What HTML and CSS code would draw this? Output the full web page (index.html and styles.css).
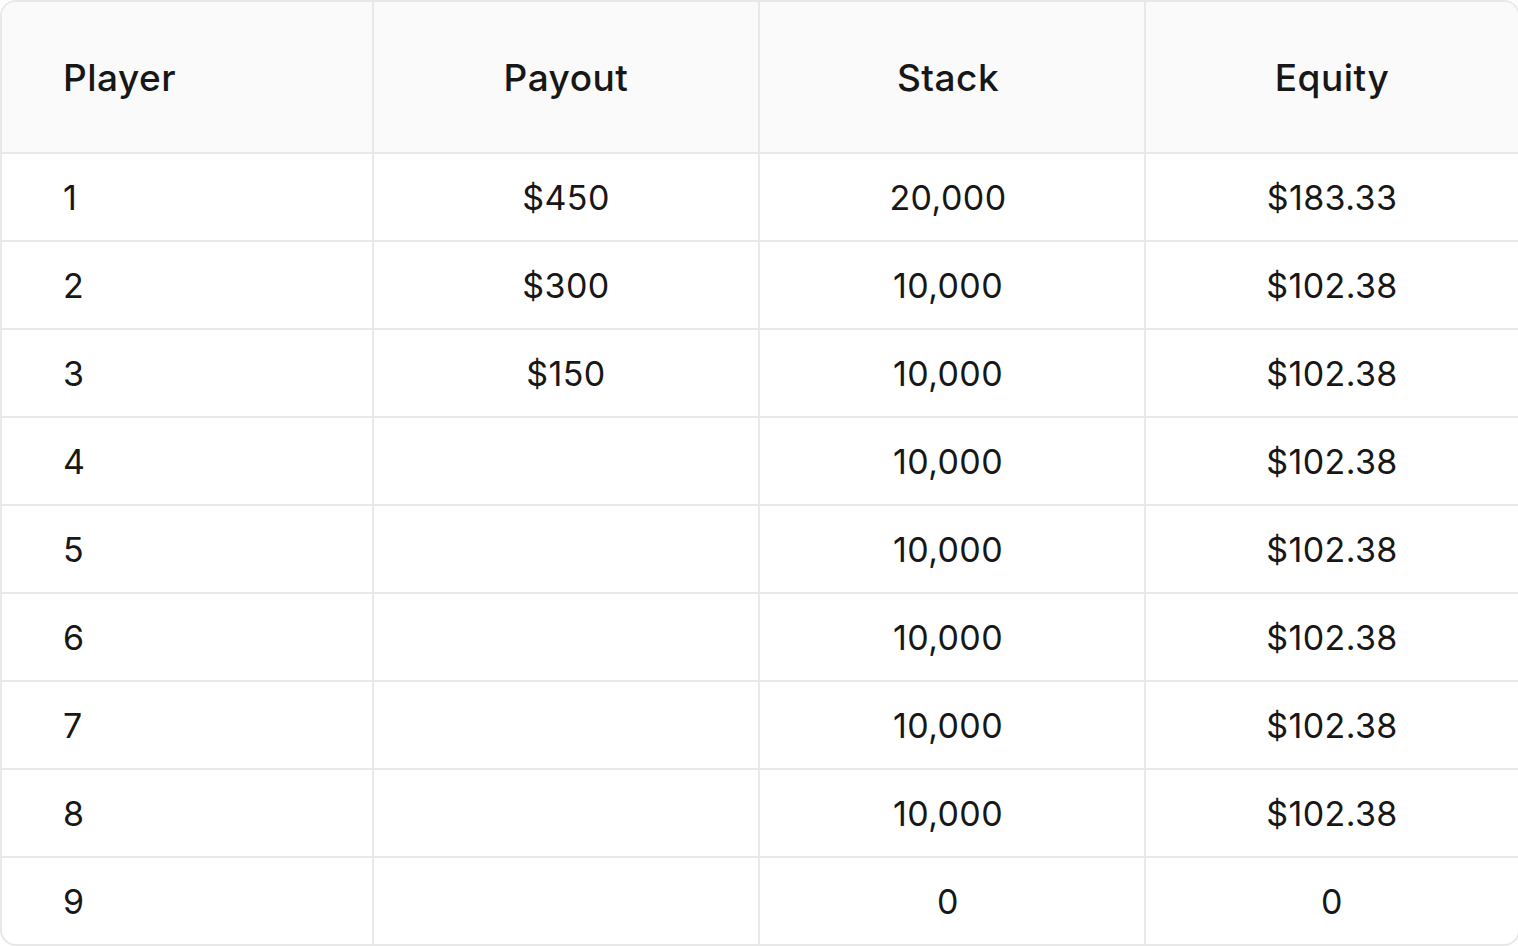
FILE: index.html
```html
<!DOCTYPE html>
<html>
<head>
<meta charset="utf-8">
<link rel="stylesheet" href="styles.css">
</head>
<body>
<div class="wrap">
<table class="icm">
  <colgroup>
    <col class="c1"><col class="c2"><col class="c3"><col class="c4">
  </colgroup>
  <thead>
    <tr><th class="left">Player</th><th>Payout</th><th class="mid">Stack</th><th>Equity</th></tr>
  </thead>
  <tbody>
    <tr><td class="left">1</td><td>$450</td><td class="mid">20,000</td><td>$183.33</td></tr>
    <tr><td class="left">2</td><td>$300</td><td class="mid">10,000</td><td>$102.38</td></tr>
    <tr><td class="left">3</td><td>$150</td><td class="mid">10,000</td><td>$102.38</td></tr>
    <tr><td class="left">4</td><td></td><td class="mid">10,000</td><td>$102.38</td></tr>
    <tr><td class="left">5</td><td></td><td class="mid">10,000</td><td>$102.38</td></tr>
    <tr><td class="left">6</td><td></td><td class="mid">10,000</td><td>$102.38</td></tr>
    <tr><td class="left">7</td><td></td><td class="mid">10,000</td><td>$102.38</td></tr>
    <tr><td class="left">8</td><td></td><td class="mid">10,000</td><td>$102.38</td></tr>
    <tr><td class="left">9</td><td></td><td class="mid">0</td><td>0</td></tr>
  </tbody>
</table>
</div>
</body>
</html>
```

FILE: styles.css
```css
html, body {
  margin: 0;
  padding: 0;
  background: #ffffff;
}
.wrap {
  width: 1518px;
}
.icm {
  width: 1518px;
  table-layout: fixed;
  border-collapse: separate;
  border-spacing: 0;
  border: 2px solid #e8e8e8;
  border-radius: 16px;
  overflow: hidden;
  font-family: Inter, "Liberation Sans", sans-serif;
  color: #171717;
}
.c1, .c4 { width: 372px; }
.c2, .c3 { width: 386px; }
.icm th, .icm td {
  text-align: center;
  padding: 0;
  border-right: 2px solid #e8e8e8;
  border-bottom: 2px solid #e8e8e8;
}
.icm th:last-child, .icm td:last-child { border-right: none; }
.icm tbody tr:last-child td { border-bottom: none; }
.icm th {
  height: 150px;
  background: #fafafa;
  font-size: 37px;
  font-weight: 500;
  letter-spacing: 0.5px;
}
.icm td {
  height: 86px;
  font-size: 34px;
  font-weight: 400;
  letter-spacing: 0.4px;
}
.icm .left {
  text-align: left;
  padding-left: 61px;
}
.icm .mid {
  padding-right: 8px;
}
```
